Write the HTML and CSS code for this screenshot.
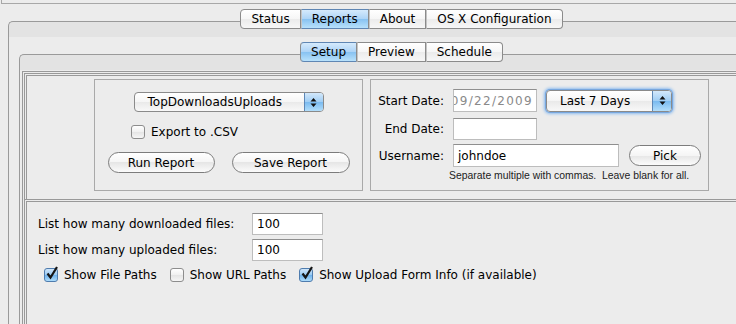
FILE: index.html
```html
<!DOCTYPE html>
<html lang="en">
<head>
    <meta charset="UTF-8">
    <meta name="viewport" content="width=device-width, initial-scale=1.0">
    <title>Reports - Setup</title>
    <link rel="stylesheet" href="styles.css">
</head>
<body>
    <div class="titlebar"></div>
    <div class="pane outer">
        <div class="tabs">
            <span class="tab first">Status</span>
            <span class="tab selected">Reports</span>
            <span class="tab">About</span>
            <span class="tab last">OS X Configuration</span>
        </div>
        <div class="pane inner">
            <div class="tabs">
                <span class="tab first selected">Setup</span>
                <span class="tab">Preview</span>
                <span class="tab last">Schedule</span>
            </div>
            <div class="content">
                <div class="panel top-panel">
                    <div class="box report-box">
                        <div class="popup report-popup">
                            <span class="popup-label">TopDownloadsUploads</span>
                            <span class="stepper"><svg width="7" height="11" viewBox="0 0 7 11"><path d="M3.5 1 L6.5 4.5 L0.5 4.5 Z M0.5 6.5 L6.5 6.5 L3.5 10 Z" fill="#111"/></svg></span>
                        </div>
                        <div class="check export"><span class="checkbox"></span>Export to .CSV</div>
                        <div class="buttons">
                            <button class="btn run">Run Report</button>
                            <button class="btn save">Save Report</button>
                        </div>
                    </div>
                    <div class="box date-box">
                        <div class="row first-row">
                            <span class="label">Start Date:</span>
                            <span class="field date disabled"><span>09/22/2009</span></span>
                            <div class="popup range-popup">
                                <span class="popup-label">Last 7 Days</span>
                                <span class="stepper"><svg width="7" height="11" viewBox="0 0 7 11"><path d="M3.5 1 L6.5 4.5 L0.5 4.5 Z M0.5 6.5 L6.5 6.5 L3.5 10 Z" fill="#111"/></svg></span>
                            </div>
                        </div>
                        <div class="row second-row">
                            <span class="label">End Date:</span>
                            <span class="field date"></span>
                        </div>
                        <div class="row third-row">
                            <span class="label">Username:</span>
                            <span class="field user">johndoe</span>
                            <button class="btn pick">Pick</button>
                        </div>
                        <p class="hint">Separate multiple with commas.&nbsp; Leave blank for all.</p>
                    </div>
                </div>
                <div class="panel bottom-panel">
                    <div class="count-row">
                        <span class="count-label">List how many downloaded files:</span>
                        <span class="field count">100</span>
                    </div>
                    <div class="count-row">
                        <span class="count-label">List how many uploaded files:</span>
                        <span class="field count">100</span>
                    </div>
                    <div class="options">
                        <div class="check"><span class="checkbox checked"><svg class="tick" width="14" height="15" viewBox="0 0 14 15"><path d="M2.5 7.5 L5.5 11.5 L12 1" fill="none" stroke="#151515" stroke-width="2.2"/></svg></span>Show File Paths</div>
                        <div class="check"><span class="checkbox"></span>Show URL Paths</div>
                        <div class="check"><span class="checkbox checked"><svg class="tick" width="14" height="15" viewBox="0 0 14 15"><path d="M2.5 7.5 L5.5 11.5 L12 1" fill="none" stroke="#151515" stroke-width="2.2"/></svg></span>Show Upload Form Info (if available)</div>
                    </div>
                </div>
            </div>
        </div>
    </div>
</body>
</html>
```

FILE: styles.css
```css
*{
    box-sizing: border-box;
}
body{
    margin: 0;
    height: 324px;
    overflow: hidden;
    background-color: #ececec;
    color: #000;
    font-family: "DejaVu Sans", sans-serif;
    font-size: 12px;
}
.titlebar{
    height: 4px;
    margin-left: 1px;
    border-left: 1px solid #a8a8a8;
    border-bottom: 1px solid #a8a8a8;
}
.pane{
    border-top: 1px solid #9a9a9a;
    border-left: 1px solid #9a9a9a;
    border-top-left-radius: 5px;
    background: linear-gradient(#e3e3e3 15px, #ececec 15px);
}
.outer{
    width: 786px;
    height: 330px;
    margin: 17px 0 0 8px;
}
.inner{
    width: 764px;
    height: 300px;
    margin: 25px 0 0 10px;
}
.tabs{
    display: flex;
    justify-content: center;
    margin-top: -13px;
}
.tab{
    height: 20px;
    line-height: 18px;
    padding: 0 10px;
    border: 1px solid #8b8b8b;
    border-left: 1px solid #c4c4c4;
    background: linear-gradient(#ffffff, #f6f6f6 50%, #ebebeb 50%, #f7f7f7);
}
.tab.first{
    border-left-color: #8b8b8b;
    border-radius: 4px 0 0 4px;
}
.tab.last{
    border-radius: 0 4px 4px 0;
}
.tab.selected{
    border-top-color: #5f86b3;
    border-bottom-color: #5f86b3;
    background: linear-gradient(#d5eafc, #acd3f6 50%, #86c1f1 50%, #b8e1fb);
}
.content{
    width: 759px;
    margin: 9px 0 0 2px;
    padding: 1px;
    border: 1px solid #999;
}
.panel{
    border: 3px double #999;
}
.top-panel{
    display: flex;
    justify-content: center;
    align-items: flex-start;
    gap: 7px;
    height: 126px;
    padding-top: 3px;
    border-bottom: none;
}
.box{
    height: 112px;
    border: 1px solid #a9a9a9;
}
.report-box{
    width: 269px;
    padding-top: 12px;
}
.date-box{
    width: 339px;
    padding-top: 9px;
}
.popup{
    display: flex;
    height: 20px;
    border: 1px solid #8a8a8a;
    border-radius: 4px;
    overflow: hidden;
    background: linear-gradient(#ffffff, #f5f5f5 50%, #e9e9e9 50%, #f8f8f8);
}
.popup-label{
    flex: 1;
    padding-left: 13px;
    line-height: 18px;
    white-space: nowrap;
}
.stepper{
    display: flex;
    align-items: center;
    justify-content: center;
    width: 19px;
    border-left: 1px solid #5d87b6;
    background: linear-gradient(#d3e8fb, #9fcdf4 50%, #78b9ef 50%, #b2defb);
}
.report-popup{
    width: 190px;
    margin: 0 auto;
}
.check{
    display: flex;
    align-items: center;
    white-space: nowrap;
}
.export{
    margin: 13px 0 0 36px;
}
.checkbox{
    position: relative;
    width: 14px;
    height: 14px;
    margin-right: 6px;
    border: 1px solid #8d8d8d;
    border-radius: 3px;
    background: linear-gradient(#ffffff, #f0f0f0 50%, #e4e4e4 50%, #f6f6f6);
}
.checkbox.checked{
    border-color: #4f7cae;
    background: linear-gradient(#cfe5fa, #98c9f2 50%, #6cb0ec 50%, #addcfb);
}
.tick{
    position: absolute;
    left: 0;
    top: -3px;
}
.buttons{
    display: flex;
    justify-content: center;
    gap: 17px;
    margin-top: 13px;
}
.btn{
    height: 21px;
    padding: 0;
    border: 1px solid #7c7c7c;
    border-radius: 11px;
    background: linear-gradient(#ffffff, #f5f5f5 50%, #e6e6e6 50%, #fbfbfb);
    font-family: "DejaVu Sans", sans-serif;
    font-size: 12px;
    color: #000;
}
.run{
    width: 107px;
}
.save{
    width: 118px;
}
.row{
    display: flex;
    align-items: center;
}
.second-row{
    margin-top: 6px;
}
.third-row{
    margin-top: 4px;
}
.label{
    width: 73px;
    margin-right: 9px;
    text-align: right;
}
.field{
    display: flex;
    align-items: center;
    height: 23px;
    padding: 0 4px;
    overflow: hidden;
    white-space: nowrap;
    background: #fff;
    border: 1px solid #bdbdbd;
    border-top-color: #8f8f8f;
}
.date{
    width: 84px;
}
.second-row .date{
    height: 22px;
}
.disabled{
    justify-content: flex-end;
    padding: 0 3px 0 0;
    color: #8a8a8a;
    letter-spacing: 1.3px;
}
.range-popup{
    width: 126px;
    height: 22px;
    margin-left: 9px;
    box-shadow: 0 0 0 1px #77a7df, 0 0 3px 2px #8dbcef;
}
.range-popup .popup-label{
    line-height: 20px;
}
.user{
    width: 166px;
}
.pick{
    width: 72px;
    margin-left: 10px;
}
.hint{
    margin: 3px 0 0 78px;
    font-family: "Liberation Sans", Arial, sans-serif;
    font-size: 10.4px;
    line-height: 12px;
    color: #222;
}
.bottom-panel{
    height: 140px;
    padding: 11px 0 0 11px;
    border-right: none;
    border-bottom: none;
}
.count-row{
    display: flex;
    align-items: center;
    margin-bottom: 4px;
}
.count-label{
    width: 214px;
}
.count{
    width: 71px;
    height: 22px;
}
.options{
    display: flex;
    gap: 13px;
    margin: 7px 0 0 6px;
}
```
